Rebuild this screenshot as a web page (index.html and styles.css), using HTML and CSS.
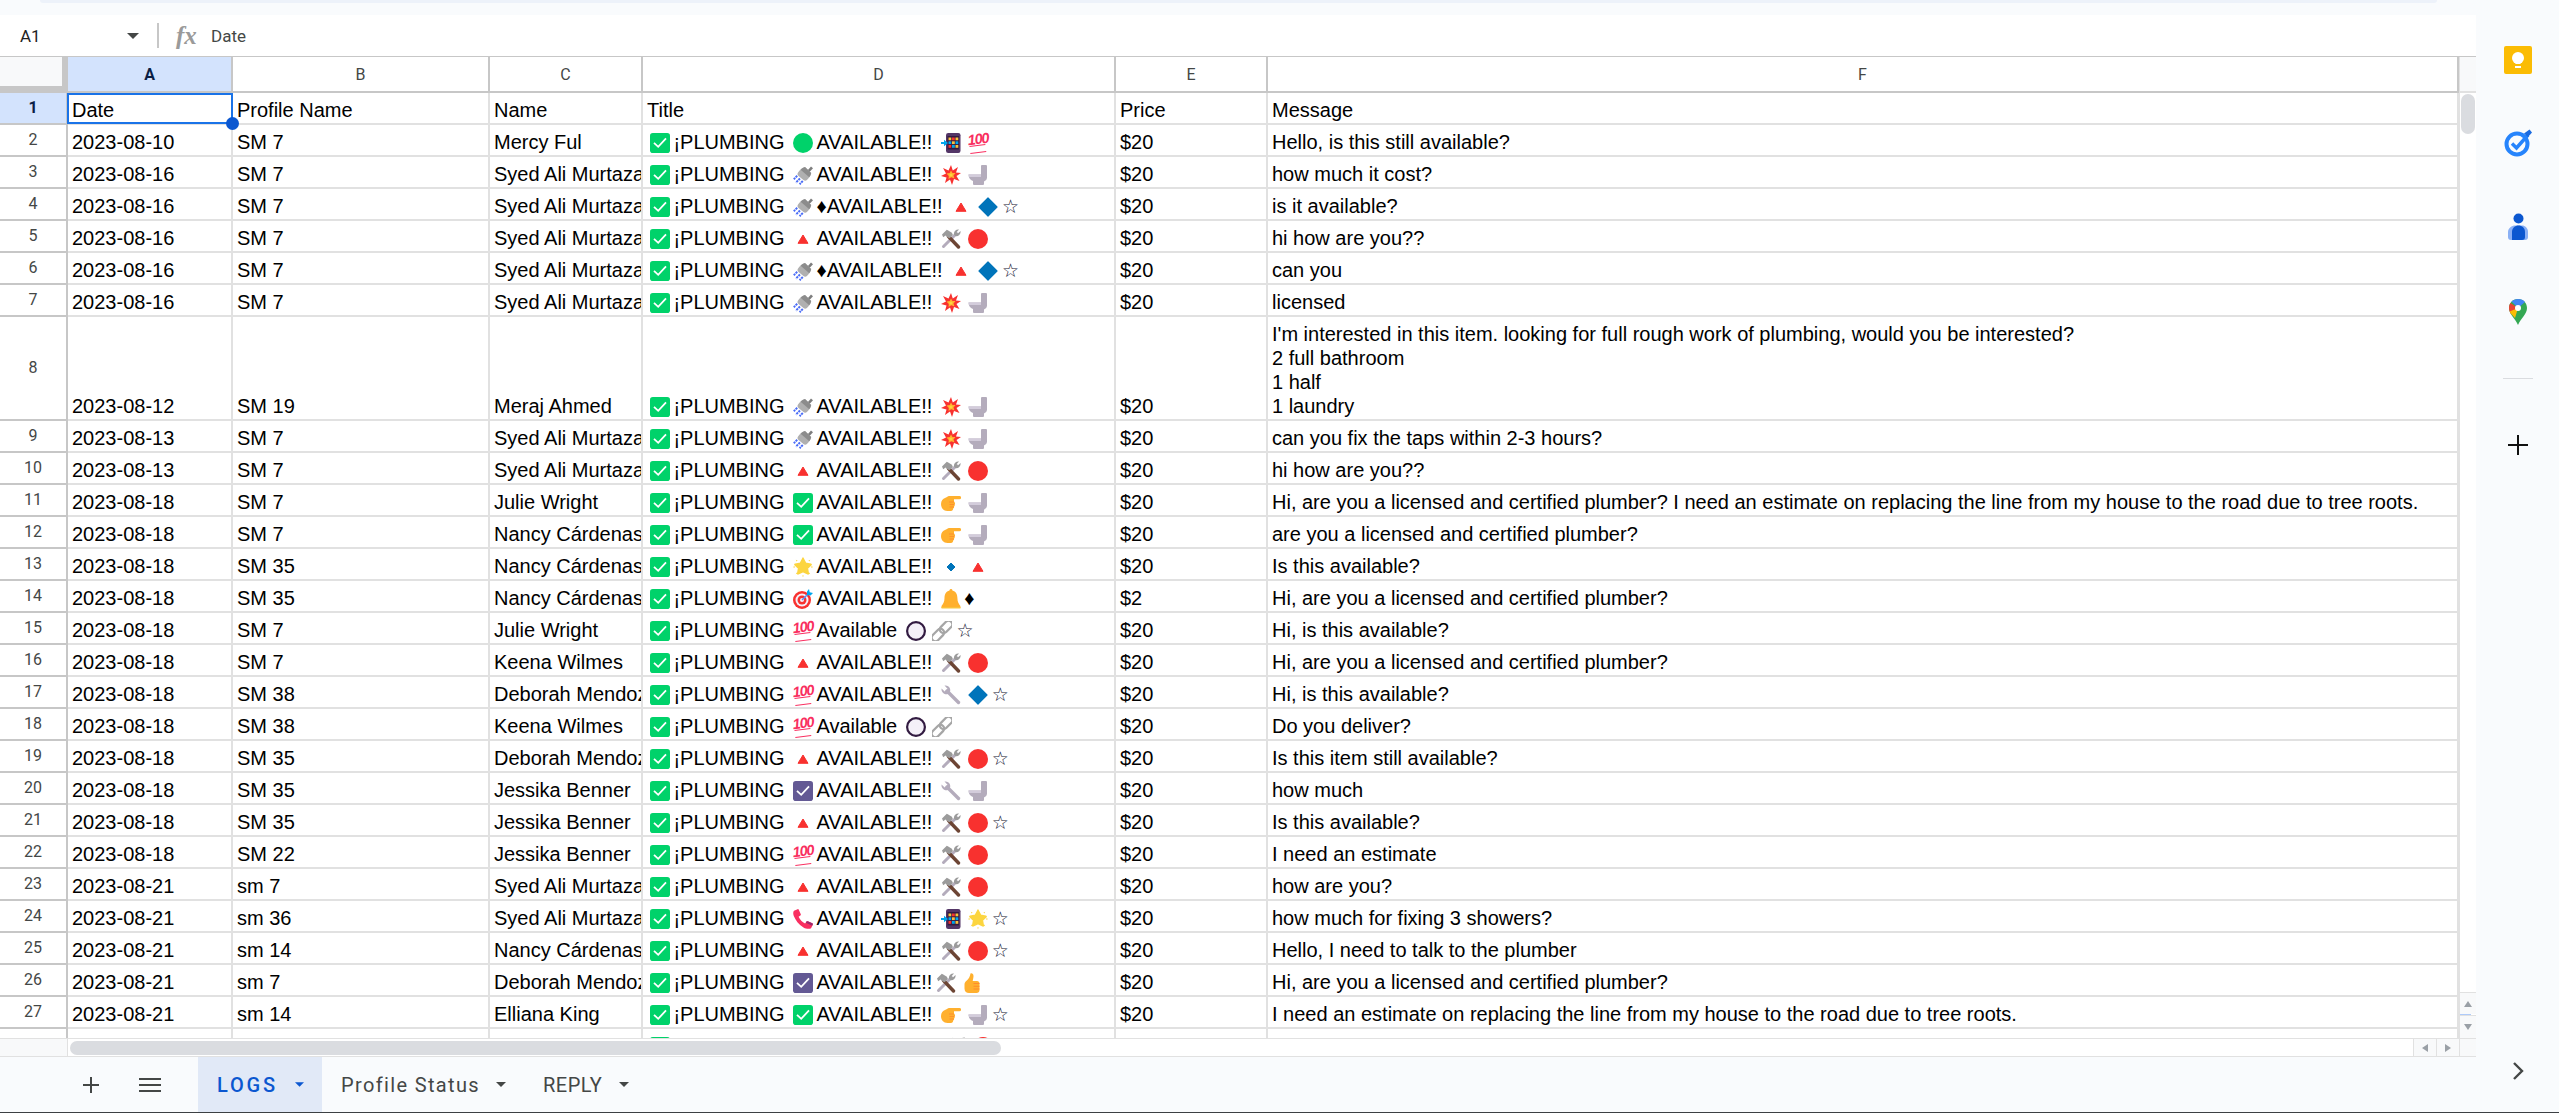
FILE: index.html
```html
<!DOCTYPE html>
<html lang="en">
<head>
<meta charset="utf-8">
<title>LOGS</title>
<link rel="stylesheet" href="styles.css">
</head>
<body>
<svg class="defs" aria-hidden="true">
  <symbol id="ck" viewBox="0 0 20 20"><rect width="20" height="20" rx="2.8" fill="#00d26a"/><path d="M4 9.8 8.2 13.8 16 5.4" fill="none" stroke="#fff" stroke-width="1.8"/></symbol>
  <symbol id="bl" viewBox="0 0 20 20"><rect width="20" height="20" rx="2.8" fill="#635994"/><path d="M4 9.8 8.2 13.8 16 5.4" fill="none" stroke="#fff" stroke-width="1.8"/></symbol>
  <symbol id="gc" viewBox="0 0 20 20"><circle cx="10" cy="10" r="10" fill="#00d26a"/></symbol>
  <symbol id="rc" viewBox="0 0 20 20"><circle cx="10" cy="10" r="10" fill="#f8312f"/></symbol>
  <symbol id="rg" viewBox="0 0 20 20"><circle cx="10" cy="10" r="8.9" fill="#f4f0f8" stroke="#321b41" stroke-width="2.2"/></symbol>
  <symbol id="sh" viewBox="0 0 20 20"><path d="M14.5 5.5 18 1.500l2 1.800-3.700 3.900z" fill="#7d7d7d"/><path d="M12 2 18.200 8c-.4 2.800-2.300 5.200-4.300 7-1.200 1-2.600.8-3.500-.1L5.300 10.800c-1-1-1.100-2.400-.1-3.600C7 5 9 2.700 12 2z" fill="#b0b0b0"/><path d="M12 2 18.200 8c-.3 1.600-1 3-1.900 4.300L7.600 4.700C8.900 3.500 10.400 2.400 12 2z" fill="#8c8c8c"/><path d="M4.200 10.800 .8 14.200M7 13.500 2.800 17.700M9.800 16 6.600 19.200" stroke="#4a6cf7" stroke-width="2" stroke-dasharray="2.200 .7" fill="none"/></symbol>
  <symbol id="bo" viewBox="0 0 20 20"><path d="M10 0 11.800 5.500 17 2 15 7.500 20 8 15.500 11 18.500 16 13 14 11 20 9 14.500 4 18 5.500 12.500 0 11 5 8.500 2 3 7.500 5.500z" fill="#f8312f"/><path d="M10 5.500 11.500 8 14.500 8 12.500 10.500 13.500 13.500 10.300 12.300 7.500 14 7.800 11 5.500 8.500 8.700 8z" fill="#ffb02e"/><circle cx="10" cy="10" r="1.600" fill="#fcd53f"/></symbol>
  <symbol id="to" viewBox="0 0 20 20"><path d="M.5 9.500H13V1a1 1 0 0 1 1-1h4a1 1 0 0 1 1 1v12a4 4 0 0 1-3 3.500V19a1 1 0 0 1-1 1H6a1 1 0 0 1-1-1v-3C2 15 .5 12.500.5 9.500z" fill="#b4acbc"/><path d="M.5 9.500H13V12H1.200z" fill="#d3ccdb"/></symbol>
  <symbol id="tr" viewBox="0 0 20 20"><path d="M10 6 15 14.300H5z" fill="#f8312f" stroke="#f8312f" stroke-width="1" stroke-linejoin="round"/></symbol>
  <symbol id="bd" viewBox="0 0 20 20"><path d="M10 1 19 10 10 19 1 10z" fill="#0074ba" stroke="#0074ba" stroke-width="1.200" stroke-linejoin="round"/></symbol>
  <symbol id="sd" viewBox="0 0 20 20"><path d="M10 6 14 10 10 14 6 10z" fill="#0074ba" stroke="#0074ba" stroke-width="1" stroke-linejoin="round"/></symbol>
  <symbol id="tl" viewBox="0 0 20 20"><path d="M15.500 4.500 2.500 17.500" stroke="#b4acbc" stroke-width="3" stroke-linecap="round"/><path d="M13 5.500a4.300 4.300 0 0 1 5-5l-2.500 2.700 1.300 1.300L19.500 2a4.300 4.300 0 0 1-5.200 5z" fill="#9b9b9b"/><path d="M7.500 7.500 17.500 18" stroke="#6d4534" stroke-width="3.400" stroke-linecap="round"/><path d="M1 5.500 5.800 .8l1.400.6 3.700 2.400 1 2.200-3.300 3.300-2.200-1-1.800-1.800-2.400 1.800z" fill="#9b9b9b"/></symbol>
  <symbol id="wr" viewBox="0 0 20 20"><path d="M6 6 17.500 17.500" stroke="#b4acbc" stroke-width="3.400" stroke-linecap="round"/><path d="M.6 3.500 3.700 6.500 6.500 3.700 3.500.6a4.800 4.800 0 0 1 5.500 6.200L6.800 9A4.800 4.800 0 0 1 .6 3.500z" fill="#b4acbc"/></symbol>
  <symbol id="pt" viewBox="0 0 20 20"><path d="M8.500 3h10a1.500 1.500 0 0 1 0 3.200L13 6.300v2l1 1.700a1.500 1.500 0 0 1-.5 1.500c.5.800.2 1.600-.5 2 .3.800 0 1.700-.8 2-.1 1.500-.8 2.500-2.200 2.500H6.500C2.500 18 0 15 0 11c0-3.500 2-5 4-6l2-1c1-.6 1.500-1 2.500-1z" fill="#ffb02e"/><path d="M8 9h5M8.500 11.500h5M8.500 14h4.500" stroke="#ff822d" stroke-width=".7" fill="none"/></symbol>
  <symbol id="th" viewBox="0 0 20 20"><path d="M8.500.5c1.500-.5 3 .5 3 2.500 0 1.500-.5 3.500-.8 5h4.300c1.500 0 2.500 1 2.500 2.300V17c0 1.800-1.200 3-3 3H7c-2.500 0-4.500-1.500-4.500-4.500v-4c0-2 1-3 2.300-4C6.500 6 8 4 8.500.5z" fill="#ffb02e"/><path d="M11.500 10.500h6M11.500 13.300h6M11.500 16h6" stroke="#ff822d" stroke-width=".8" fill="none"/></symbol>
  <symbol id="gl" viewBox="0 0 20 20"><path d="M10 2 12.500 6.700 17.800 7.500 14 11.300 15 16.600 10 14.200 5 16.600 6 11.300 2.200 7.500 7.500 6.700z" fill="#fcd53f" stroke="#fcd53f" stroke-width="2.200" stroke-linejoin="round"/><path d="M10 0 10.900 1.600H9.100zM10 20 9.100 18.400h1.800zM0 10 1.600 9.100v1.800zM20 10 18.400 10.900V9.100zM2.800 2.800 4.600 3.600 3.600 4.600zM17.200 2.800 16.400 4.600 15.400 3.600zM2.800 17.200 3.600 15.400 4.600 16.400zM17.200 17.200 15.400 16.400 16.400 15.400z" fill="#fcd53f"/></symbol>
  <symbol id="da" viewBox="0 0 20 20"><circle cx="9" cy="11" r="9" fill="#f8312f"/><circle cx="9" cy="11" r="6.500" fill="#f4f0f8"/><circle cx="9" cy="11" r="4.500" fill="#f8312f"/><circle cx="9" cy="11" r="2" fill="#f4f0f8"/><path d="M9 11 16 4" stroke="#5092ff" stroke-width="1.400"/><path d="M14 2.500 16 0l.7 3.200L20 4l-2.500 2.500-3.500-.5z" fill="#00a6ed"/></symbol>
  <symbol id="be" viewBox="0 0 20 20"><path d="M10 0c.8 0 1.400.6 1.400 1.400 3.500.8 5 4 5 7.500 0 4 1.500 6 3 8V19H.5v-2.100c1.500-2 3-4 3-8 0-3.500 1.500-6.700 5-7.500C8.600.6 9.200 0 10 0z" fill="#ffb02e"/><path d="M.5 18h19v1.500H.5z" fill="#f9c23c"/></symbol>
  <symbol id="lk" viewBox="0 0 20 20"><g transform="rotate(-45 10 10)" fill="none" stroke="#a6a6a6" stroke-width="2.300"><rect x="-3" y="6.300" width="14.500" height="7.400" rx="3.700"/><rect x="8.500" y="6.300" width="14.500" height="7.400" rx="3.700"/></g></symbol>
  <symbol id="ph" viewBox="0 0 20 20"><path d="M1 1.800 4.600.2c.5-.2 1 0 1.200.5l2 4.500c.2.500 0 1-.4 1.300L5.600 7.800c1.300 2.900 3.600 5.300 6.500 6.600l1.400-1.800c.3-.4.800-.5 1.300-.3l4.500 2c.5.200.7.700.5 1.200l-1.600 3.400C17 20 14 20.500 10.500 18.500 5.500 15.500 2.500 11 .8 7 0 5 0 3 1 1.800z" fill="#f92f60"/><path d="M13.500 12.600c.3-.4.800-.5 1.300-.3l4.500 2c.5.200.7.700.5 1.200l-.6 1.300-6.300-3z" fill="#9a2a6d"/></symbol>
  <symbol id="mo" viewBox="0 0 20 20"><rect x="5" width="14.500" height="20" rx="2.200" fill="#533566"/><rect x="6.500" y="3" width="11.500" height="13.500" fill="#321b41"/><path d="M7.500 4.500h2.800v2.800H7.500z" fill="#f9c23c"/><path d="M11 4.500h2.800v2.800H11z" fill="#f8312f"/><path d="M14.500 4.500h2.800v2.800h-2.800z" fill="#f9c23c"/><path d="M7.500 8.300h2.800v2.800H7.500z" fill="#00a6ed"/><path d="M11 8.300h2.800v2.800H11z" fill="#f9c23c"/><path d="M14.500 8.300h2.800v2.800h-2.800z" fill="#00a6ed"/><path d="M7.500 12h2.800v2.800H7.500z" fill="#f8312f"/><path d="M11 12h2.800v2.800H11z" fill="#00a6ed"/><path d="M14.500 12h2.800v2.800h-2.800z" fill="#f9c23c"/><path d="M0 9h3V6.800L7 10l-4 3.200V11H0z" fill="#00a6ed"/></symbol>
  <symbol id="ca" viewBox="0 0 12 6"><path d="M0 0h12L6 6z"/></symbol>
</svg>

<div class="app">
  <div class="top"><div class="pill"></div></div>
  <div class="main">
    <div class="work">
      <div class="formula">
        <span class="namebox">A1</span>
        <svg class="caret"><use href="#ca"/></svg>
        <span class="fdiv"></span>
        <span class="fx">fx</span>
        <span class="fval">Date</span>
      </div>
      <div class="gridwrap">
        <div class="tablebox">
          <table class="sheet">
            <colgroup><col class="w0"><col class="wa"><col class="wb"><col class="wc"><col class="wd"><col class="we"><col class="wf"></colgroup>
            <thead>
              <tr><th class="corner"><div class="cornerin"></div></th><th class="sela">A</th><th>B</th><th>C</th><th>D</th><th>E</th><th>F</th></tr>
            </thead>
            <tbody>
              <tr><th class="selr">1</th><td class="cur">Date<span class="selbox"></span><span class="seldot"></span></td><td>Profile Name</td><td class="cl">Name</td><td>Title</td><td>Price</td><td>Message</td></tr>
              <tr><th>2</th><td>2023-08-10</td><td>SM 7</td><td class="cl">Mercy Ful</td><td><svg class="e"><use href="#ck"/></svg>¡PLUMBING <svg class="e"><use href="#gc"/></svg>AVAILABLE!! <svg class="e"><use href="#mo"/></svg><span class="hd">100</span></td><td>$20</td><td>Hello, is this still available?</td></tr>
              <tr><th>3</th><td>2023-08-16</td><td>SM 7</td><td class="cl">Syed Ali Murtaza</td><td><svg class="e"><use href="#ck"/></svg>¡PLUMBING <svg class="e"><use href="#sh"/></svg>AVAILABLE!! <svg class="e"><use href="#bo"/></svg><svg class="e"><use href="#to"/></svg></td><td>$20</td><td>how much it cost?</td></tr>
              <tr><th>4</th><td>2023-08-16</td><td>SM 7</td><td class="cl">Syed Ali Murtaza</td><td><svg class="e"><use href="#ck"/></svg>¡PLUMBING <svg class="e"><use href="#sh"/></svg>♦AVAILABLE!! <svg class="e"><use href="#tr"/></svg><svg class="e"><use href="#bd"/></svg><span class="st">☆</span></td><td>$20</td><td>is it available?</td></tr>
              <tr><th>5</th><td>2023-08-16</td><td>SM 7</td><td class="cl">Syed Ali Murtaza</td><td><svg class="e"><use href="#ck"/></svg>¡PLUMBING <svg class="e"><use href="#tr"/></svg>AVAILABLE!! <svg class="e"><use href="#tl"/></svg><svg class="e"><use href="#rc"/></svg></td><td>$20</td><td>hi how are you??</td></tr>
              <tr><th>6</th><td>2023-08-16</td><td>SM 7</td><td class="cl">Syed Ali Murtaza</td><td><svg class="e"><use href="#ck"/></svg>¡PLUMBING <svg class="e"><use href="#sh"/></svg>♦AVAILABLE!! <svg class="e"><use href="#tr"/></svg><svg class="e"><use href="#bd"/></svg><span class="st">☆</span></td><td>$20</td><td>can you</td></tr>
              <tr><th>7</th><td>2023-08-16</td><td>SM 7</td><td class="cl">Syed Ali Murtaza</td><td><svg class="e"><use href="#ck"/></svg>¡PLUMBING <svg class="e"><use href="#sh"/></svg>AVAILABLE!! <svg class="e"><use href="#bo"/></svg><svg class="e"><use href="#to"/></svg></td><td>$20</td><td>licensed</td></tr>
              <tr class="tall"><th>8</th><td>2023-08-12</td><td>SM 19</td><td class="cl">Meraj Ahmed</td><td><svg class="e"><use href="#ck"/></svg>¡PLUMBING <svg class="e"><use href="#sh"/></svg>AVAILABLE!! <svg class="e"><use href="#bo"/></svg><svg class="e"><use href="#to"/></svg></td><td>$20</td><td>I'm interested in this item. looking for full rough work of plumbing, would you be interested?<br>2 full bathroom<br>1 half<br>1 laundry</td></tr>
              <tr><th>9</th><td>2023-08-13</td><td>SM 7</td><td class="cl">Syed Ali Murtaza</td><td><svg class="e"><use href="#ck"/></svg>¡PLUMBING <svg class="e"><use href="#sh"/></svg>AVAILABLE!! <svg class="e"><use href="#bo"/></svg><svg class="e"><use href="#to"/></svg></td><td>$20</td><td>can you fix the taps within 2-3 hours?</td></tr>
              <tr><th>10</th><td>2023-08-13</td><td>SM 7</td><td class="cl">Syed Ali Murtaza</td><td><svg class="e"><use href="#ck"/></svg>¡PLUMBING <svg class="e"><use href="#tr"/></svg>AVAILABLE!! <svg class="e"><use href="#tl"/></svg><svg class="e"><use href="#rc"/></svg></td><td>$20</td><td>hi how are you??</td></tr>
              <tr><th>11</th><td>2023-08-18</td><td>SM 7</td><td class="cl">Julie Wright</td><td><svg class="e"><use href="#ck"/></svg>¡PLUMBING <svg class="e"><use href="#ck"/></svg>AVAILABLE!! <svg class="e"><use href="#pt"/></svg><svg class="e"><use href="#to"/></svg></td><td>$20</td><td>Hi, are you a licensed and certified plumber? I need an estimate on replacing the line from my house to the road due to tree roots.</td></tr>
              <tr><th>12</th><td>2023-08-18</td><td>SM 7</td><td class="cl">Nancy Cárdenas</td><td><svg class="e"><use href="#ck"/></svg>¡PLUMBING <svg class="e"><use href="#ck"/></svg>AVAILABLE!! <svg class="e"><use href="#pt"/></svg><svg class="e"><use href="#to"/></svg></td><td>$20</td><td>are you a licensed and certified plumber?</td></tr>
              <tr><th>13</th><td>2023-08-18</td><td>SM 35</td><td class="cl">Nancy Cárdenas</td><td><svg class="e"><use href="#ck"/></svg>¡PLUMBING <svg class="e"><use href="#gl"/></svg>AVAILABLE!! <svg class="e"><use href="#sd"/></svg><svg class="e"><use href="#tr"/></svg></td><td>$20</td><td>Is this available?</td></tr>
              <tr><th>14</th><td>2023-08-18</td><td>SM 35</td><td class="cl">Nancy Cárdenas</td><td><svg class="e"><use href="#ck"/></svg>¡PLUMBING <svg class="e"><use href="#da"/></svg>AVAILABLE!! <svg class="e"><use href="#be"/></svg>♦</td><td>$2</td><td>Hi, are you a licensed and certified plumber?</td></tr>
              <tr><th>15</th><td>2023-08-18</td><td>SM 7</td><td class="cl">Julie Wright</td><td><svg class="e"><use href="#ck"/></svg>¡PLUMBING <span class="hd">100</span>Available <svg class="e"><use href="#rg"/></svg><svg class="e"><use href="#lk"/></svg><span class="st">☆</span></td><td>$20</td><td>Hi, is this available?</td></tr>
              <tr><th>16</th><td>2023-08-18</td><td>SM 7</td><td class="cl">Keena Wilmes</td><td><svg class="e"><use href="#ck"/></svg>¡PLUMBING <svg class="e"><use href="#tr"/></svg>AVAILABLE!! <svg class="e"><use href="#tl"/></svg><svg class="e"><use href="#rc"/></svg></td><td>$20</td><td>Hi, are you a licensed and certified plumber?</td></tr>
              <tr><th>17</th><td>2023-08-18</td><td>SM 38</td><td class="cl">Deborah Mendoza</td><td><svg class="e"><use href="#ck"/></svg>¡PLUMBING <span class="hd">100</span>AVAILABLE!! <svg class="e"><use href="#wr"/></svg><svg class="e"><use href="#bd"/></svg><span class="st">☆</span></td><td>$20</td><td>Hi, is this available?</td></tr>
              <tr><th>18</th><td>2023-08-18</td><td>SM 38</td><td class="cl">Keena Wilmes</td><td><svg class="e"><use href="#ck"/></svg>¡PLUMBING <span class="hd">100</span>Available <svg class="e"><use href="#rg"/></svg><svg class="e"><use href="#lk"/></svg></td><td>$20</td><td>Do you deliver?</td></tr>
              <tr><th>19</th><td>2023-08-18</td><td>SM 35</td><td class="cl">Deborah Mendoza</td><td><svg class="e"><use href="#ck"/></svg>¡PLUMBING <svg class="e"><use href="#tr"/></svg>AVAILABLE!! <svg class="e"><use href="#tl"/></svg><svg class="e"><use href="#rc"/></svg><span class="st">☆</span></td><td>$20</td><td>Is this item still available?</td></tr>
              <tr><th>20</th><td>2023-08-18</td><td>SM 35</td><td class="cl">Jessika Benner</td><td><svg class="e"><use href="#ck"/></svg>¡PLUMBING <svg class="e"><use href="#bl"/></svg>AVAILABLE!! <svg class="e"><use href="#wr"/></svg><svg class="e"><use href="#to"/></svg></td><td>$20</td><td>how much</td></tr>
              <tr><th>21</th><td>2023-08-18</td><td>SM 35</td><td class="cl">Jessika Benner</td><td><svg class="e"><use href="#ck"/></svg>¡PLUMBING <svg class="e"><use href="#tr"/></svg>AVAILABLE!! <svg class="e"><use href="#tl"/></svg><svg class="e"><use href="#rc"/></svg><span class="st">☆</span></td><td>$20</td><td>Is this available?</td></tr>
              <tr><th>22</th><td>2023-08-18</td><td>SM 22</td><td class="cl">Jessika Benner</td><td><svg class="e"><use href="#ck"/></svg>¡PLUMBING <span class="hd">100</span>AVAILABLE!! <svg class="e"><use href="#tl"/></svg><svg class="e"><use href="#rc"/></svg></td><td>$20</td><td>I need an estimate</td></tr>
              <tr><th>23</th><td>2023-08-21</td><td>sm 7</td><td class="cl">Syed Ali Murtaza</td><td><svg class="e"><use href="#ck"/></svg>¡PLUMBING <svg class="e"><use href="#tr"/></svg>AVAILABLE!! <svg class="e"><use href="#tl"/></svg><svg class="e"><use href="#rc"/></svg></td><td>$20</td><td>how are you?</td></tr>
              <tr><th>24</th><td>2023-08-21</td><td>sm 36</td><td class="cl">Syed Ali Murtaza</td><td><svg class="e"><use href="#ck"/></svg>¡PLUMBING <svg class="e"><use href="#ph"/></svg>AVAILABLE!! <svg class="e"><use href="#mo"/></svg><svg class="e"><use href="#gl"/></svg><span class="st">☆</span></td><td>$20</td><td>how much for fixing 3 showers?</td></tr>
              <tr><th>25</th><td>2023-08-21</td><td>sm 14</td><td class="cl">Nancy Cárdenas</td><td><svg class="e"><use href="#ck"/></svg>¡PLUMBING <svg class="e"><use href="#tr"/></svg>AVAILABLE!! <svg class="e"><use href="#tl"/></svg><svg class="e"><use href="#rc"/></svg><span class="st">☆</span></td><td>$20</td><td>Hello, I need to talk to the plumber</td></tr>
              <tr><th>26</th><td>2023-08-21</td><td>sm 7</td><td class="cl">Deborah Mendoza</td><td><svg class="e"><use href="#ck"/></svg>¡PLUMBING <svg class="e"><use href="#bl"/></svg>AVAILABLE!!<svg class="e"><use href="#tl"/></svg><svg class="e"><use href="#th"/></svg></td><td>$20</td><td>Hi, are you a licensed and certified plumber?</td></tr>
              <tr><th>27</th><td>2023-08-21</td><td>sm 14</td><td class="cl">Elliana King</td><td><svg class="e"><use href="#ck"/></svg>¡PLUMBING <svg class="e"><use href="#ck"/></svg>AVAILABLE!! <svg class="e"><use href="#pt"/></svg><svg class="e"><use href="#to"/></svg><span class="st">☆</span></td><td>$20</td><td>I need an estimate on replacing the line from my house to the road due to tree roots.</td></tr>
              <tr class="partial"><th></th><td></td><td></td><td></td><td><svg class="e"><use href="#ck"/></svg><span class="spacer"></span><svg class="e"><use href="#tl"/></svg><svg class="e"><use href="#rc"/></svg></td><td></td><td></td></tr>
            </tbody>
          </table>
        </div>
        <div class="vscroll">
          <div class="vhead"></div>
          <div class="vthumb"></div>
          <div class="vbtn vup"><span class="tri tup"></span></div>
          <div class="vmark"></div>
          <div class="vbtn"><span class="tri tdown"></span></div>
        </div>
      </div>
      <div class="hscroll">
        <div class="hleft"></div>
        <div class="hthumb"></div>
        <div class="hbtn hfirst"><span class="tri tleft"></span></div>
        <div class="hbtn"><span class="tri tright"></span></div>
        <div class="hcorner"></div>
      </div>
      <div class="tabs">
        <svg class="tplus" viewBox="0 0 18 18"><path d="M9 1v16M1 9h16" stroke="#444746" stroke-width="2" fill="none"/></svg>
        <svg class="tmenu" viewBox="0 0 22 16"><path d="M0 2h22M0 8h22M0 14h22" stroke="#444746" stroke-width="2" fill="none"/></svg>
        <div class="tab active"><span>LOGS</span><svg class="tcaret"><use href="#ca"/></svg></div>
        <div class="tab wide"><span>Profile Status</span><svg class="tcaret"><use href="#ca"/></svg></div>
        <div class="tab"><span>REPLY</span><svg class="tcaret"><use href="#ca"/></svg></div>
      </div>
    </div>
    <aside class="side">
      <svg class="sico keep" viewBox="0 0 28 28"><rect width="28" height="28" rx="2" fill="#fbbc04"/><circle cx="14" cy="12" r="6" fill="#fff"/><path d="M11.500 16h5v2h-5z" fill="#fff"/><path d="M11 20h6v2h-6z" fill="#fff"/></svg>
      <svg class="sico tasks" viewBox="0 0 28 28"><circle cx="13" cy="15" r="10.500" fill="none" stroke="#2684fc" stroke-width="4"/><path d="M8 14.500 12.500 19 24 6" fill="none" stroke="#2684fc" stroke-width="3.500"/><path d="M20 4.500 25.500.5 28 3.500 24 8z" fill="#1a6be0"/></svg>
      <svg class="sico contacts" viewBox="0 0 28 28"><circle cx="14.500" cy="5.500" r="5" fill="#0b57d0"/><path d="M7 27h14a3 3 0 0 0 3-3v-5c0-4-3-6.500-6-6.500h-7C8 12.500 4 15 4 19v5a3 3 0 0 0 3 3z" fill="#8ab0f5"/><path d="M8 27V19c0-4 3-6.500 6.500-6.500S21 15 21 19v5a3 3 0 0 1-3 3z" fill="#0b57d0"/></svg>
      <svg class="sico maps" viewBox="0 0 28 28"><path d="M14 1C8.500 1 5 5 5 10c0 6 6 10 9 17 3-7 9-11 9-17 0-5-3.500-9-9-9z" fill="#34a853"/><path d="M6.500 5 14 10l-7 6c-1.200-2-2-4-2-6 0-1.900.5-3.600 1.500-5z" fill="#ea4335"/><path d="M7.500 3.500C9 2 11.500 1 14 1c3 0 5.500 1 7 3l-7 6z" fill="#4285f4"/><path d="M5.700 13.500 14 10l-3 10c-2-2.500-4.200-4-5.300-6.500z" fill="#fbbc04"/><circle cx="14" cy="10" r="3" fill="#fff"/></svg>
      <div class="sline"></div>
      <svg class="sico splus" viewBox="0 0 28 28"><path d="M14 4v20M4 14h20" stroke="#111" stroke-width="2" fill="none"/></svg>
      <svg class="sico schev" viewBox="0 0 28 28"><path d="M10 6l8 8-8 8" stroke="#444746" stroke-width="2.400" fill="none"/></svg>
    </aside>
  </div>
</div>
</body>
</html>
```

FILE: styles.css
```css
* { box-sizing: border-box; }
html, body { margin: 0; padding: 0; }
body { background: #f9fbfd; overflow: hidden; }
.defs { position: absolute; width: 0; height: 0; }

.app { width: 2559px; height: 1113px; display: flex; flex-direction: column; border-bottom: 1px solid #3c4043; background: #f9fbfd; overflow: hidden; }
.top { height: 15px; flex: none; padding: 0 122px 0 40px; }
.pill { height: 3px; background: #edf2fa; border-radius: 0 0 14px 14px; }
.main { flex: 1; display: flex; min-height: 0; }
.work { width: 2476px; flex: none; display: flex; flex-direction: column; }

.formula { height: 41px; flex: none; background: #fff; display: flex; align-items: center; padding-left: 20px; font-family: Roboto, sans-serif; font-size: 17px; color: #1f1f1f; }
.namebox { width: 107px; }
.caret { width: 12px; height: 6px; fill: #444746; }
.fdiv { width: 2px; height: 25px; background: #c7c7c7; margin-left: 18px; }
.fx { font-family: "Liberation Serif", serif; font-style: italic; font-weight: 700; font-size: 25px; color: #9a9a9a; margin-left: 17px; width: 35px; }
.fval { color: #444746; }

.gridwrap { height: 982px; flex: none; display: flex; background: #fff; border-top: 1px solid #c7c7c7; }
.tablebox { width: 2459px; flex: none; overflow: hidden; }
.sheet { table-layout: fixed; width: 2459px; border-collapse: separate; border-spacing: 0; font-family: "Liberation Sans", Arial, sans-serif; font-size: 20px; line-height: 24px; color: #000; }
.w0 { width: 68px; } .wa { width: 165px; } .wb { width: 257px; } .wc { width: 153px; } .wd { width: 473px; } .we { width: 152px; } .wf { width: 1191px; }

.sheet th { font-family: Roboto, sans-serif; font-weight: 400; font-size: 16px; color: #444746; padding: 0; text-align: center; border-right: 2px solid #c7c7c7; border-bottom: 2px solid #c7c7c7; vertical-align: middle; background: #fff; }
.sheet thead th { height: 36px; padding-top: 2px; }
.sheet tbody tr { height: 32px; }
.sheet tbody tr.tall { height: 104px; }
.sheet tbody th { height: 32px; }
.sheet td { padding: 0 4px 1px; vertical-align: bottom; white-space: nowrap; border-right: 2px solid #e1e1e1; border-bottom: 2px solid #e1e1e1; }
.sheet .cl { overflow: hidden; }
.sheet .corner { background: #c7c7c7; vertical-align: top; border: 0; padding: 0; }
.cornerin { width: 62px; height: 29px; background: #f8f9fa; }
.sheet .sela { background: #d3e3fd; font-weight: 700; color: #0b1f45; }
.sheet .selr { background: #d3e3fd; font-weight: 700; color: #0b1f45; }
.cur { position: relative; }
.selbox { position: absolute; left: -1px; top: 0; right: -2px; bottom: -1px; border: 2px solid #1a73e8; }
.seldot { position: absolute; right: -8px; bottom: -7px; width: 13px; height: 13px; border-radius: 50%; background: #0b57d0; z-index: 2; }

.e { width: 20px; height: 20px; margin: 0 3.2px; vertical-align: -3.5px; }
.hd { display: inline-block; position: relative; width: 20px; height: 20px; margin: 0 3.2px; vertical-align: 4.7px; font-style: italic; font-weight: 700; font-size: 14.5px; line-height: 14px; letter-spacing: -1.2px; text-align: center; color: #f92f60; transform: rotate(-7deg); }
.hd::after { content: ""; position: absolute; left: 1px; right: 3px; top: 13px; height: 6px; border-top: 1.6px solid #f92f60; border-bottom: 1.6px solid #f92f60; }
.st { font-family: "DejaVu Sans", sans-serif; font-size: 19px; line-height: 20px; margin-left: 1px; color: #101030; }
.spacer { display: inline-block; width: 270px; height: 1px; }

.vscroll { flex: 1; display: flex; flex-direction: column; background: #fff; border-left: 1px solid #e1e1e1; }
.vhead { height: 36px; flex: none; background: #f8f9fa; border-bottom: 2px solid #e1e1e1; }
.vthumb { width: 14px; height: 40px; margin: 1px 0 0 1px; border-radius: 7px; background: #dadce0; }
.vbtn { height: 23px; flex: none; background: #f8f9fa; border-top: 1px solid #e1e1e1; display: flex; align-items: center; justify-content: center; }
.vup { margin-top: auto; height: 22px; }
.vmark { width: 11px; height: 1px; flex: none; background: #aecbfa; }
.tri { width: 0; height: 0; border-style: solid; border-color: transparent; }
.tup { border-width: 0 4px 6px; border-bottom-color: #9aa0a6; }
.tdown { border-width: 6px 4px 0; border-top-color: #9aa0a6; }
.tleft { border-width: 4px 6px 4px 0; border-right-color: #9aa0a6; }
.tright { border-width: 4px 0 4px 6px; border-left-color: #9aa0a6; }

.hscroll { height: 19px; flex: none; background: #fff; border-top: 1px solid #e1e1e1; border-bottom: 1px solid #e1e1e1; display: flex; }
.hleft { width: 68px; background: #f8f9fa; border-right: 1px solid #e1e1e1; }
.hthumb { width: 931px; height: 14px; margin: 2px 0 0 2px; border-radius: 7px; background: #dadce0; }
.hbtn { width: 23px; background: #f8f9fa; border-left: 1px solid #e1e1e1; display: flex; align-items: center; justify-content: center; }
.hfirst { margin-left: auto; }
.hcorner { width: 17px; background: #f8f9fa; border-left: 1px solid #e1e1e1; }

.tabs { flex: 1; display: flex; align-items: center; font-family: Roboto, sans-serif; font-size: 20px; color: #444746; letter-spacing: .5px; }
.tplus { width: 18px; height: 18px; margin-left: 82px; }
.tmenu { width: 22px; height: 16px; margin-left: 39px; margin-right: 37px; }
.tab { height: 100%; display: flex; align-items: center; gap: 17px; padding: 0 18px 0 19px; }
.tab.active { background: #e1e9f7; color: #0b57d0; font-weight: 500; letter-spacing: 2.8px; width: 124px; }
.tab.wide { letter-spacing: 1.35px; gap: 16px; }
.tcaret { width: 10px; height: 5px; fill: #444746; }
.active .tcaret { fill: #0b57d0; }

.side { flex: 1; display: flex; flex-direction: column; align-items: center; padding-top: 31px; }
.sico { width: 28px; height: 28px; flex: none; }
.tasks { margin-top: 55px; }
.contacts { margin-top: 56px; }
.maps { margin-top: 57px; }
.sline { width: 30px; height: 1px; background: #dadce0; margin-top: 52px; }
.splus { margin-top: 52px; }
.schev { margin-top: auto; margin-bottom: 27px; }
```
